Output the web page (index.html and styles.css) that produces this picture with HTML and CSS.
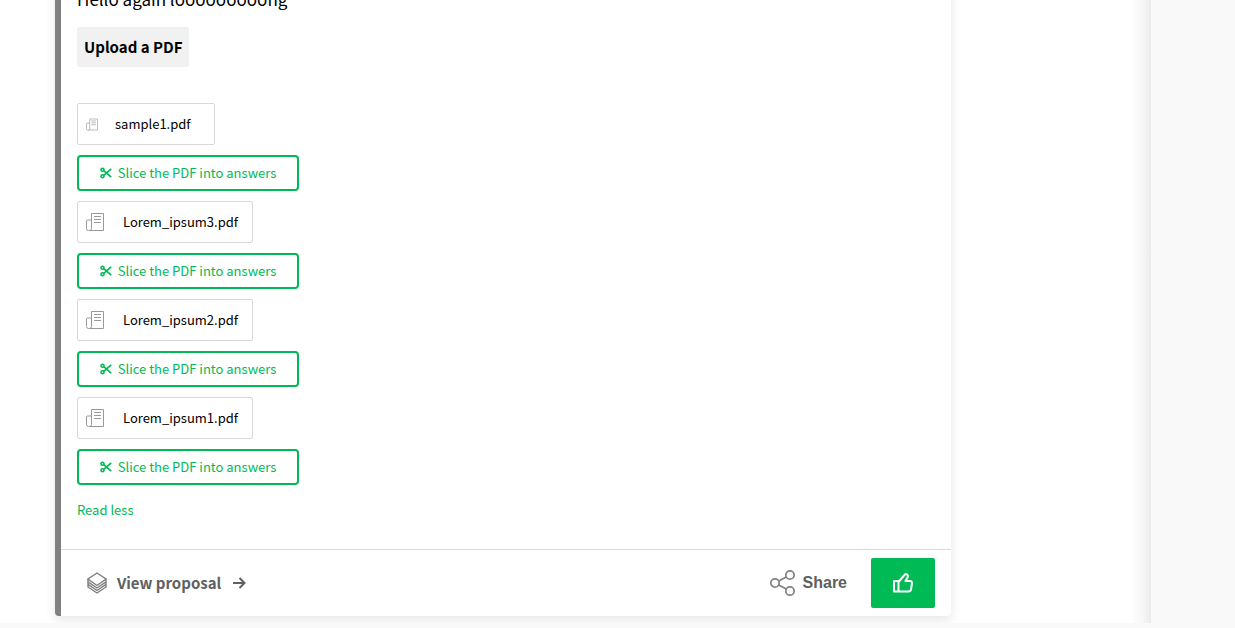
FILE: index.html
```html
<!DOCTYPE html>
<html lang="en">
<head>
  <meta charset="UTF-8">
  <meta name="viewport" content="width=device-width, initial-scale=1.0">
  <title>Proposal</title>
  <link rel="stylesheet" href="styles.css">
</head>
<body>

<!-- Shared icons -->
<svg class="sprite" aria-hidden="true">
  <symbol id="icon-doc" viewBox="0 0 18 20">
    <path d="M5.5 1.5h12v17H3M5.500 1.500v15q0 2-2 2h-1q-2 0-2-2v-7.500q0-1 1-1h4M8 4.500h7M8 7.500h7M8 10.500h7" fill="none" stroke="currentColor"/>
  </symbol>
  <symbol id="icon-scissors" viewBox="0 0 12 12">
    <g fill="none" stroke="currentColor">
      <circle cx="2.500" cy="2.700" r="1.500" stroke-width="1.600"/>
      <circle cx="2.500" cy="9.300" r="1.500" stroke-width="1.600"/>
      <path d="M3.800 3.700l7.400 6.500M3.800 8.300l7.400-6.500" stroke-width="1.700"/>
    </g>
  </symbol>
</svg>

<main class="page">
  <article class="card">
    <div class="content">
      <p class="intro">Hello again looooooooong</p>
      <button class="upload" type="button">Upload a PDF</button>

      <div class="files">
        <a class="file" href="#"><svg class="doc small"><use href="#icon-doc"/></svg><span>sample1.pdf</span></a>
        <button class="slice" type="button"><svg><use href="#icon-scissors"/></svg>Slice the PDF into answers</button>

        <a class="file" href="#"><svg class="doc"><use href="#icon-doc"/></svg><span>Lorem_ipsum3.pdf</span></a>
        <button class="slice" type="button"><svg><use href="#icon-scissors"/></svg>Slice the PDF into answers</button>

        <a class="file" href="#"><svg class="doc"><use href="#icon-doc"/></svg><span>Lorem_ipsum2.pdf</span></a>
        <button class="slice" type="button"><svg><use href="#icon-scissors"/></svg>Slice the PDF into answers</button>

        <a class="file" href="#"><svg class="doc"><use href="#icon-doc"/></svg><span>Lorem_ipsum1.pdf</span></a>
        <button class="slice" type="button"><svg><use href="#icon-scissors"/></svg>Slice the PDF into answers</button>
      </div>

      <a class="read-less" href="#">Read less</a>
    </div>

    <footer class="actions">
      <a class="view" href="#">
        <svg class="layers" viewBox="0 0 20 22" fill="none" stroke="currentColor" stroke-width="1.400">
          <path d="M10 1l9 6-9 6.500-9-6.500z"/>
          <path d="M1 7v8l9 6 9-6v-8M1 9.800l9 6.200 9-6.200M1 12.400l9 6.100 9-6.100"/>
        </svg>
        View proposal
        <svg class="arrow" viewBox="0 0 13 12" fill="none" stroke="currentColor" stroke-width="2">
          <path d="M0 6h11M6.500 1l5 5-5 5"/>
        </svg>
      </a>

      <button class="share" type="button">
        <svg viewBox="0 0 26 26" fill="none" stroke="#808080" stroke-width="1.700">
          <circle cx="5" cy="13" r="4.200"/>
          <circle cx="20" cy="5" r="4.200"/>
          <circle cx="20" cy="21" r="4.200"/>
          <path d="M8.700 11l7.600-4M8.700 15l7.600 4"/>
        </svg>
        Share
      </button>

      <button class="like" type="button" aria-label="Like">
        <svg viewBox="0 0 20 20" fill="none" stroke="currentColor" stroke-width="2" stroke-linejoin="round">
          <path d="M1 8h4.500v10.500H1zM5.500 9l5.500-6.500q1.500-2 3-1 1.500 1 .5 3L12.500 8H17q2 0 2 2l-1 6.500q-.5 2-2.500 2h-10"/>
        </svg>
      </button>
    </footer>
  </article>
</main>

</body>
</html>
```
FILE: styles.css
```css
* {
  box-sizing: border-box;
}
body {
  margin: 0;
  background-color: #f9f9f9;
  font-family: "Noto Sans CJK SC", "Noto Sans", sans-serif;
  font-size: 13px;
  line-height: 20px;
  color: #000;
  overflow: hidden;
}
a {
  color: inherit;
  text-decoration: none;
}
button {
  font: inherit;
  cursor: pointer;
}
.sprite {
  display: none;
}
/* the page is scrolled down to the end of the card */
.page {
  margin-top: -29px;
  margin-right: 84px;
  padding: 0 200px 7px 55px;
  background: linear-gradient(to left, #ebebeb, #f6f6f6 8px, #fff 20px) #fff;
}
.card {
  border-left: 6px solid #808080;
  border-radius: 4px;
  background-color: #fff;
  box-shadow: 0 4px 12px rgba(0, 0, 0, 0.1);
}
.content {
  display: flex;
  flex-direction: column;
  align-items: flex-start;
  padding: 16px 16px 29px;
}
.intro {
  margin: 0 0 16px;
  font-size: 17px;
  line-height: 24px;
}
.upload {
  height: 40px;
  padding: 0 7px;
  border: none;
  border-radius: 2px;
  background-color: #f1f1f1;
  color: #000;
  font-size: 15px;
  font-weight: bold;
}
.files {
  display: flex;
  flex-direction: column;
  align-items: flex-start;
  gap: 10px;
  margin: 36px 0 15px;
}
.file {
  display: flex;
  align-items: center;
  height: 42px;
  padding: 0 14px 0 8px;
  border: 1px solid #d8d8d8;
  border-radius: 2px;
}
.doc {
  width: 18px;
  height: 20px;
  margin-right: 19px;
  color: #999;
}
.doc.small {
  width: 12px;
  height: 13px;
  margin-right: 17px;
}
.doc.small + span {
  padding-right: 9px;
}
.slice {
  display: flex;
  align-items: center;
  justify-content: center;
  gap: 6px;
  width: 222px;
  height: 36px;
  border: 2px solid #00ba56;
  border-radius: 4px;
  background-color: #fff;
  color: #00ba56;
}
.slice svg {
  width: 12px;
  height: 12px;
}
.read-less {
  color: #00ba56;
}
.actions {
  display: flex;
  align-items: center;
  padding: 8px 16px;
  border-top: 1px solid #d8d8d8;
  color: #606060;
  font-size: 15px;
  font-weight: bold;
}
.view {
  display: flex;
  align-items: center;
  gap: 10px;
  padding-left: 10px;
}
.layers {
  width: 20px;
  height: 22px;
  color: #808080;
}
.arrow {
  width: 13px;
  height: 12px;
  margin-left: 2px;
}
.share {
  display: flex;
  align-items: center;
  gap: 7px;
  margin-left: auto;
  margin-right: 24px;
  padding: 0;
  border: none;
  background: none;
  color: #606060;
  font-family: "Liberation Sans", Arial, sans-serif;
  font-size: 16px;
}
.share svg {
  width: 26px;
  height: 26px;
}
.like {
  display: flex;
  align-items: center;
  justify-content: center;
  width: 64px;
  height: 50px;
  border: none;
  border-radius: 2px;
  background-color: #00ba56;
  color: #fff;
}
.like svg {
  width: 20px;
  height: 20px;
}
```
